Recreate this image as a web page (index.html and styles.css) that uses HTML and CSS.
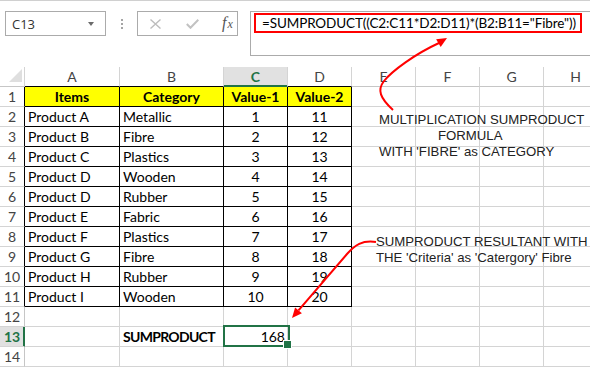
FILE: index.html
```html
<!DOCTYPE html>
<html>
<head>
<meta charset="utf-8">
<link rel="stylesheet" href="styles.css">
</head>
<body>
<div class="app">
  <div class="topline"></div>
  <div class="fbar">
    <div class="namebox"><span>C13</span><span class="caret"></span></div>
    <div class="grip"><i></i><i></i><i></i></div>
    <div class="btns">
      <svg class="ix" width="11" height="10" viewBox="0 0 11 10"><path d="M0.5,0.5 L10.5,9.5 M10.5,0.5 L0.5,9.5" stroke="#bdbdbd" stroke-width="1.4" fill="none"/></svg>
      <svg class="ick" width="13" height="10" viewBox="0 0 13 10"><path d="M0.8,5 L4.5,8.8 L12.3,0.8" stroke="#c2c2c2" stroke-width="2" fill="none"/></svg>
      <span class="fx"><i>f</i><i class="sub">x</i></span>
    </div>
    <div class="formula"><div class="redbox">=SUMPRODUCT((C2:C11*D2:D11)*(B2:B11="Fibre"))</div></div>
  </div>
  <div class="sheet">
    <div class="corner"><svg width="24" height="19" viewBox="0 0 24 19"><polygon points="22,2 22,15 9,15" fill="#dfdfdf"/></svg></div>
    <div class="ch tb">A</div><div class="ch tb">B</div><div class="ch sel">C</div><div class="ch tb">D</div><div class="ch">E</div><div class="ch">F</div><div class="ch">G</div><div class="ch">H</div>

    <div class="rh edge">1</div><div class="c t hd">Items</div><div class="c t hd">Category</div><div class="c t hd">Value-1</div><div class="c t hd">Value-2</div><div class="c"></div><div class="c"></div><div class="c"></div><div class="c"></div>
    <div class="rh edge">2</div><div class="c t l">Product A</div><div class="c t l">Metallic</div><div class="c t m">1</div><div class="c t m">11</div><div class="c"></div><div class="c"></div><div class="c"></div><div class="c"></div>
    <div class="rh edge">3</div><div class="c t l">Product B</div><div class="c t l">Fibre</div><div class="c t m">2</div><div class="c t m">12</div><div class="c"></div><div class="c"></div><div class="c"></div><div class="c"></div>
    <div class="rh edge">4</div><div class="c t l">Product C</div><div class="c t l">Plastics</div><div class="c t m">3</div><div class="c t m">13</div><div class="c"></div><div class="c"></div><div class="c"></div><div class="c"></div>
    <div class="rh edge">5</div><div class="c t l">Product D</div><div class="c t l">Wooden</div><div class="c t m">4</div><div class="c t m">14</div><div class="c"></div><div class="c"></div><div class="c"></div><div class="c"></div>
    <div class="rh edge">6</div><div class="c t l">Product D</div><div class="c t l">Rubber</div><div class="c t m">5</div><div class="c t m">15</div><div class="c"></div><div class="c"></div><div class="c"></div><div class="c"></div>
    <div class="rh edge">7</div><div class="c t l">Product E</div><div class="c t l">Fabric</div><div class="c t m">6</div><div class="c t m">16</div><div class="c"></div><div class="c"></div><div class="c"></div><div class="c"></div>
    <div class="rh edge">8</div><div class="c t l">Product F</div><div class="c t l">Plastics</div><div class="c t m">7</div><div class="c t m">17</div><div class="c"></div><div class="c"></div><div class="c"></div><div class="c"></div>
    <div class="rh edge">9</div><div class="c t l">Product G</div><div class="c t l">Fibre</div><div class="c t m">8</div><div class="c t m">18</div><div class="c"></div><div class="c"></div><div class="c"></div><div class="c"></div>
    <div class="rh edge">10</div><div class="c t l">Product H</div><div class="c t l">Rubber</div><div class="c t m">9</div><div class="c t m">19</div><div class="c"></div><div class="c"></div><div class="c"></div><div class="c"></div>
    <div class="rh edge">11</div><div class="c t l">Product I</div><div class="c t l">Wooden</div><div class="c t m">10</div><div class="c t m">20</div><div class="c"></div><div class="c"></div><div class="c"></div><div class="c"></div>
    <div class="rh">12</div><div class="c"></div><div class="c"></div><div class="c"></div><div class="c"></div><div class="c"></div><div class="c"></div><div class="c"></div><div class="c"></div>
    <div class="rh sel">13</div><div class="c"></div><div class="c l b tight">SUMPRODUCT</div><div class="c r cur">168</div><div class="c"></div><div class="c"></div><div class="c"></div><div class="c"></div><div class="c"></div>
    <div class="rh">14</div><div class="c"></div><div class="c"></div><div class="c"></div><div class="c"></div><div class="c"></div><div class="c"></div><div class="c"></div><div class="c"></div>
  </div>

  <div class="note n1"><div>MULTIPLICATION SUMPRODUCT</div><div class="ind">FORMULA</div><div>WITH 'FIBRE' as CATEGORY</div></div>
  <div class="note n2"><div>SUMPRODUCT RESULTANT WITH</div><div>THE 'Criteria' as 'Catergory' Fibre</div></div>

  <svg class="arrows" width="590" height="367" viewBox="0 0 590 367">
    <path d="M393,110 C380,98 377,90 384,81 C392,71 415,54 439,43" fill="none" stroke="#ff0000" stroke-width="2"/>
    <polygon points="447,38 440.7,47 436.1,39.2" fill="#ff0000"/>
    <path d="M376,242 C362,240 355,245 347,254 L298.5,310.4" fill="none" stroke="#ff0000" stroke-width="2"/>
    <polygon points="292,318 301.9,313.3 295.1,307.5" fill="#ff0000"/>
  </svg>
</div>
</body>
</html>
```

FILE: styles.css
```css
* { box-sizing: border-box; }
html, body { margin: 0; padding: 0; }
body {
  width: 590px;
  height: 367px;
  overflow: hidden;
  background: #fff;
  font-family: Lato, "Liberation Sans", sans-serif;
}
.app { position: relative; width: 590px; height: 367px; overflow: hidden; }
.topline { height: 1px; background: #d0d0d0; }

.fbar { display: flex; align-items: flex-start; padding-top: 10px; height: 66px; }
.namebox {
  margin-left: 5px; width: 101px; height: 25px; flex: none;
  border: 1px solid #ababab;
  display: flex; align-items: center; justify-content: space-between;
  padding: 0 11px 0 6px;
  font-family: "Open Sans", sans-serif; font-size: 13px; color: #333;
}
.caret {
  width: 0; height: 0;
  border-left: 3.5px solid transparent; border-right: 3.5px solid transparent;
  border-top: 4px solid #6b6b6b;
}
.grip { margin-left: 15px; margin-top: 8px; display: flex; flex-direction: column; gap: 2px; flex: none; }
.grip i { display: block; width: 2px; height: 2px; background: #a5a5a5; }
.btns {
  margin-left: 14px; width: 101px; height: 25px; flex: none;
  border: 1px solid #ababab;
  display: flex; align-items: center; padding-left: 12px;
}
.btns .ick { margin-left: 25px; }
.btns .fx {
  margin-left: 23px;
  font-family: "Liberation Serif", serif; font-size: 16px; color: #555;
  line-height: 16px;
}
.btns .fx .sub { font-size: 12px; margin-left: 1px; }
.formula {
  margin-left: 12px; width: 360px; height: 45px; flex: none;
  border: 1px solid #ababab;
  padding: 1px 0 0 3px;
}
.redbox {
  width: 328px; height: 20px;
  border: 2px solid #f00;
  padding-left: 6px;
  font-size: 13.5px; letter-spacing: -0.12px; line-height: 16px; color: #000;
  white-space: nowrap;
}

.sheet {
  display: grid;
  grid-template-columns: 25px 95px 104px 64px 64px 64px 64px 64px 64px;
  grid-auto-rows: 20px;
  font-size: 14px;
  color: #000;
}
.sheet > div {
  border-right: 1px solid #d4d4d4;
  border-bottom: 1px solid #d4d4d4;
  line-height: 19px;
  white-space: nowrap;
  overflow: hidden;
}
.corner { border-bottom-color: #c6c6c6 !important; }
.corner svg { display: block; }
.ch { text-align: center; color: #444; border-bottom-color: #c6c6c6 !important; }
.ch.tb { border-bottom-color: #000 !important; }
.ch.sel {
  background: #e1e1e1; color: #217346; font-weight: bold;
  border-bottom-color: #217346 !important;
  box-shadow: inset 0 -1px #217346;
}
.rh { text-align: center; color: #444; border-right-color: #c6c6c6 !important; }
.rh.edge { border-right-color: #000 !important; }
.rh.sel {
  background: #e1e1e1; color: #217346; font-weight: bold;
  border-right-color: #217346 !important;
  box-shadow: inset -1px 0 #217346;
}
.sheet > .t { border-right-color: #000; border-bottom-color: #000; }
.hd { background: #ff0; font-weight: bold; text-align: center; }
.l { padding-left: 3px; }
.m { text-align: center; }
.r { text-align: right; padding-right: 2px; }
.b { font-weight: bold; }
.tight { letter-spacing: -0.7px; }
.sheet > .cur { position: relative; overflow: visible; }
.cur::before {
  content: ""; position: absolute;
  top: -2px; left: -1px; right: -3px; bottom: -1px;
  border: 2px solid #217346;
}
.cur::after {
  content: ""; position: absolute;
  width: 7px; height: 7px; right: -5px; bottom: -3px;
  background: #217346; border: 1px solid #fff;
}

.note {
  position: absolute;
  font-family: "Liberation Sans", Arial, sans-serif;
  font-size: 13.2px; line-height: 16px; color: #222;
  white-space: nowrap;
}
.n1 { left: 379px; top: 112px; }
.n2 { left: 376px; top: 234px; }
.ind { padding-left: 59px; }
.arrows { position: absolute; left: 0; top: 0; pointer-events: none; }
```
